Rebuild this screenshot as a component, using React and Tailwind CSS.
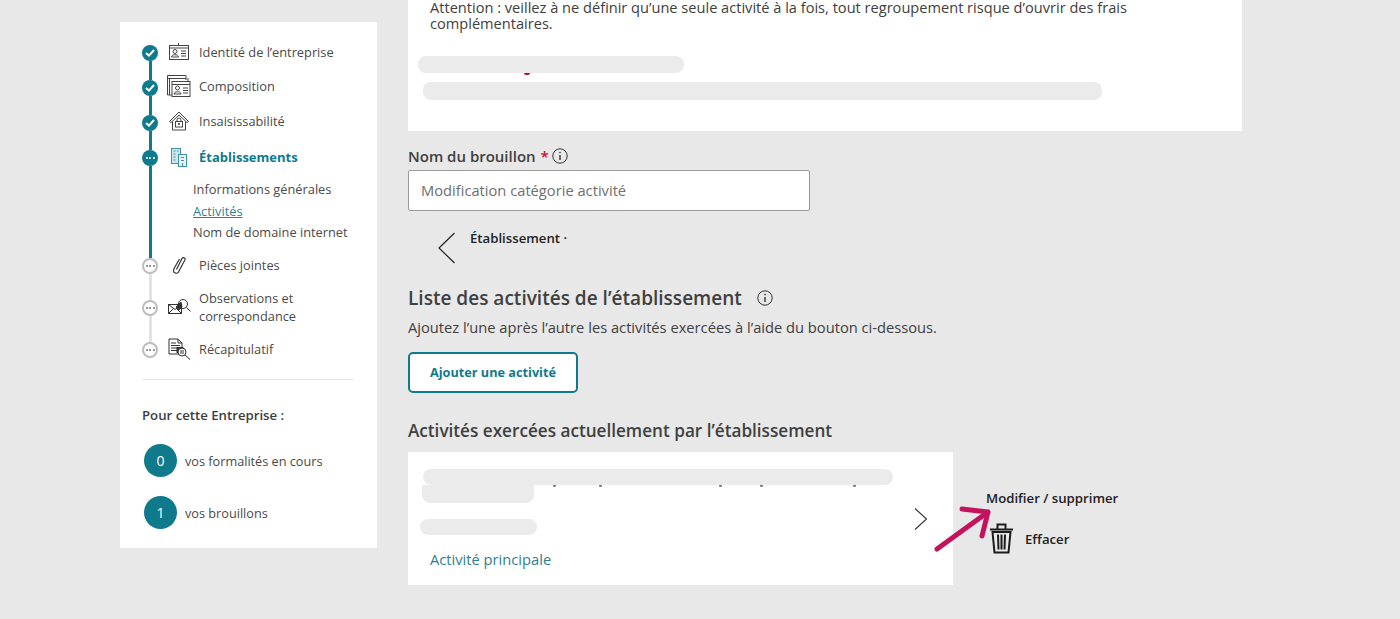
import React from "react";

function IdCard() {
  return (
    <svg width="20" height="18" viewBox="0 0 20 18" fill="none" stroke="#444" strokeWidth="1">
      <rect x="0.500" y="2.500" width="19" height="14" />
      <path d="M0.500 5h19M9.500 0v3" />
      <circle cx="6" cy="8.500" r="2" />
      <path d="M2.500 14c0-3 7-3 7 0M2.500 14h7M12 8h5M12 10.500h5M12 13h5" />
    </svg>
  );
}

function CardStack() {
  return (
    <svg width="24" height="23" viewBox="0 0 24 23" fill="none" stroke="#444" strokeWidth="1">
      <path d="M5 20H0.500V0.500H19V5M0.500 3.500H19" />
      <path d="M2.500 20V3M21 7V3" />
      <rect x="5" y="6.500" width="18" height="15" fill="#fff" />
      <path d="M5 9.500h18" />
      <circle cx="10.500" cy="13" r="2" />
      <path d="M7 19c0-3 7-3 7 0ZM16 13h5M16 15.500h5M16 18h5" />
    </svg>
  );
}

function HouseLock() {
  return (
    <svg width="20" height="20" viewBox="0 0 20 20" fill="none" stroke="#444" strokeWidth="1">
      <path d="M0.500 10.500L10 1l9.500 9.500-1.500 1L10 4 2 11.500Z" />
      <path d="M3.500 10.500v8.500h13v-8.500" />
      <rect x="6.500" y="10.500" width="7" height="5.500" />
      <path d="M8 10.500V9a2 2 0 0 1 4 0v1.500" />
      <circle cx="10" cy="13" r="0.700" fill="#444" />
    </svg>
  );
}

function Building() {
  return (
    <svg width="16" height="19" viewBox="0 0 16 19" fill="none" stroke="#3f93a8" strokeWidth="1">
      <rect x="0.500" y="0.500" width="9" height="15" fill="#cfe6ec" />
      <rect x="7.500" y="6.500" width="8" height="12" fill="#e6f2f5" />
      <path d="M2.500 3h2M6 3h1.500M2.500 6h2M2.500 9h2M2.500 12h2M10 9.500h3M10 12.500h3M11.500 15v3" />
    </svg>
  );
}

function Clip() {
  return (
    <svg width="14" height="19" viewBox="0 0 14 19" fill="none" stroke="#333" strokeWidth="1.200" strokeLinejoin="round">
      <path d="M4.500 13.500L10 2.500c.8-1.500 3.500-.5 3 1.200L6.500 16c-1 2-5 1.500-5-1l.5-2.500L7.500 3" />
    </svg>
  );
}

function MailSearch() {
  return (
    <svg width="23" height="18" viewBox="0 0 23 18" fill="none" stroke="#333" strokeWidth="1">
      <rect x="0.500" y="6.500" width="13" height="9" fill="#fff" />
      <path d="M0.500 6.500l6.500 5 6.500-5M0.500 15.500l5-5M13.500 15.500l-5-5" />
      <path d="M8 9l5-5 1 5-3 3Z" fill="#333" />
      <circle cx="15" cy="6" r="4.500" />
      <path d="M18.500 9.500l4 4" />
    </svg>
  );
}

function DocSearch() {
  return (
    <svg width="23" height="22" viewBox="0 0 23 22" fill="none" stroke="#333" strokeWidth="1">
      <path d="M13 16H1V1h9l4 4v5" />
      <path d="M10 1v4h4M3 5h5M3 7.500h9M3 10h6M3 12.500h6" />
      <rect x="9" y="9.500" width="6" height="5" fill="#333" />
      <circle cx="14" cy="14" r="4" fill="#fff" />
      <path d="M12 13h4M12 15h4M17 17l5 4.500" />
    </svg>
  );
}

function Info({ size = 16 }) {
  return (
    <svg width={size} height={size} viewBox="0 0 16 16" fill="none" stroke="#333" strokeWidth="1">
      <circle cx="8" cy="8" r="7.200" />
      <path d="M8 7v5" strokeWidth="1.400" />
      <circle cx="8" cy="4.600" r="0.800" fill="#333" stroke="none" />
    </svg>
  );
}

function Dot({ done, active }) {
  if (done) {
    return (
      <span className="w-4 h-4 shrink-0 rounded-full bg-[#0f7a8c] flex items-center justify-center">
        <svg width="10" height="8" viewBox="0 0 10 8" fill="none" stroke="#fff" strokeWidth="2">
          <path d="M1 4l3 2.600L9 1" />
        </svg>
      </span>
    );
  }
  return (
    <span
      className={`w-4 h-4 shrink-0 rounded-full flex items-center justify-center gap-[1.500px] ${
        active ? "bg-[#0f7a8c]" : "bg-white border-2 border-[#bdbdbd]"
      }`}
    >
      {[0, 1, 2].map((i) => (
        <span key={i} className={`w-[2px] h-[2px] rounded-full ${active ? "bg-white" : "bg-[#777]"}`} />
      ))}
    </span>
  );
}

function Step({ icon, height, line, done, active, textTop, children, sub }) {
  return (
    <div className={`flex ${height}`}>
      <div className="w-4 flex flex-col items-center shrink-0">
        <Dot done={done} active={active} />
        {line && <div className={`w-[3px] flex-1 ${line}`} />}
      </div>
      <div className="ml-2 min-w-0">
        <div className={`flex items-center ${textTop}`}>
          <div className="w-[26px] flex justify-center shrink-0">{icon}</div>
          <div className={`ml-[7px] ${active ? "font-bold text-[13px] text-[#0f7a8c]" : "text-[#4a4a4a]"}`}>{children}</div>
        </div>
        {sub}
      </div>
    </div>
  );
}

function Sidebar() {
  return (
    <aside className="w-[257px] h-[526px] mt-[22px] bg-white shrink-0 pl-[22px] pr-[23px] pt-[23px] text-[12.800px] leading-[18px]">
      <Step icon={<IdCard />} height="h-[35px]" line="bg-[#0f7a8c]" done textTop="-mt-[3px] h-5">
        Identité de l’entreprise
      </Step>
      <Step icon={<CardStack />} height="h-[35px]" line="bg-[#0f7a8c]" done textTop="-mt-[4px] h-5">
        Composition
      </Step>
      <Step icon={<HouseLock />} height="h-[35px]" line="bg-[#0f7a8c]" done textTop="-mt-[4px] h-5">
        Insaisissabilité
      </Step>
      <Step
        icon={<Building />}
        height="h-[108px]"
        line="bg-[#0f7a8c]"
        active
        textTop="-mt-[3px] h-5"
        sub={
          <div className="ml-[27px] mt-[13px] flex flex-col gap-[3.500px] text-[#4a4a4a] whitespace-nowrap">
            <div>Informations générales</div>
            <div className="text-[#2f7f92] underline">Activités</div>
            <div>Nom de domaine internet</div>
          </div>
        }
      >
        Établissements
      </Step>
      <Step icon={<Clip />} height="h-[42px]" line="bg-[#e3e3e3]" textTop="-mt-[3px] h-5">
        Pièces jointes
      </Step>
      <Step icon={<MailSearch />} height="h-[42px]" line="bg-[#e3e3e3]" textTop="-mt-[11px] h-9">
        Observations et
        <br />
        correspondance
      </Step>
      <Step icon={<DocSearch />} height="h-[37px]" textTop="-mt-[3px] h-5">
        Récapitulatif
      </Step>
      <div className="h-px bg-[#e4e4e4]" />
      <div className="mt-[26px] font-semibold text-[13.200px] text-[#3d3d3d]">Pour cette Entreprise :</div>
      <div className="mt-[20px] ml-[2px] flex flex-col gap-[19px] text-[#4a4a4a] text-[12.700px]">
        <div className="flex items-center gap-2">
          <span className="w-[33px] h-[33px] rounded-full bg-[#0f7a8c] text-white text-[14px] flex items-center justify-center">0</span>
          vos formalités en cours
        </div>
        <div className="flex items-center gap-2">
          <span className="w-[33px] h-[33px] rounded-full bg-[#0f7a8c] text-white text-[14px] flex items-center justify-center">1</span>
          vos brouillons
        </div>
      </div>
    </aside>
  );
}

function Main() {
  return (
    <main className="w-[834px] shrink-0 text-[#404040]">
      {/* top notice */}
      <section className="h-[131px] bg-white pl-[22px] pr-[100px] text-[14.600px] leading-[16px]">
        <p className="-translate-y-px">
          Attention : veillez à ne définir qu’une seule activité à la fois, tout regroupement risque d’ouvrir des frais
          complémentaires.
        </p>
        <div className="relative h-[17px] w-[266px] -ml-[12px] mt-[24px] rounded-lg bg-[#ebebeb]">
          <span className="absolute left-[106px] -bottom-[2px] w-[6px] h-[2px] rounded-b-full bg-[#b0103f]" />
        </div>
        <div className="h-[18px] w-[679px] -ml-[7px] mt-[9px] rounded-lg bg-[#ebebeb]" />
      </section>

      {/* draft name */}
      <div className="mt-[15px] flex items-center h-5 text-[15px] font-semibold">
        Nom du brouillon
        <span className="text-[#c8102e] ml-[5px]">*</span>
        <span className="ml-[3px]">
          <Info />
        </span>
      </div>
      <div className="mt-[4px] w-[402px] h-[41px] bg-white border border-[#9a9a9a] rounded-[2px] flex items-center pl-[12px] text-[14.700px] text-[#6f6f6f]">
        Modification catégorie activité
      </div>

      <div className="mt-[21px] ml-[30px] flex items-start h-[32px]">
        <svg width="18" height="32" viewBox="0 0 18 32" fill="none" stroke="#222" strokeWidth="1.200">
          <path d="M16.500 1L1 16l15.500 15" />
        </svg>
        <span className="ml-[14px] -mt-[4px] text-[13.200px] leading-5 font-semibold text-[#222]">Établissement ·</span>
      </div>

      <div className="mt-[22px] flex items-center h-6">
        <h2 className="text-[19.050px] font-semibold">Liste des activités de l’établissement</h2>
        <span className="ml-[15px]">
          <Info />
        </span>
      </div>
      <p className="mt-[7px] text-[14.700px] leading-5">
        Ajoutez l’une après l’autre les activités exercées à l’aide du bouton ci-dessous.
      </p>
      <button className="mt-[15px] w-[170px] h-[41px] bg-white border-2 border-[#0f7a8c] rounded-[5px] text-[12.700px] font-bold text-[#0f7a8c]">
        Ajouter une activité
      </button>
      <h3 className="mt-[27px] text-[17.150px] leading-[22px] font-semibold">
        Activités exercées actuellement par l’établissement
      </h3>

      {/* activity row */}
      <div className="mt-[10px] flex items-start">
        <section className="w-[545px] h-[133px] bg-white flex shrink-0">
          <div className="flex-1 pl-[22px] pt-[17px]">
            <div className="relative h-[16px] w-[470px] -ml-[7px] rounded-lg bg-[#ebebeb]">
              {["left-[130px]", "left-[176px]", "left-[296px]", "left-[337px]", "left-[430px]"].map((pos) => (
                <span key={pos} className={`absolute ${pos} -bottom-[2px] w-[3px] h-[2px] rounded-b-full bg-[#777]`} />
              ))}
            </div>
            <div className="h-[18px] w-[112px] -ml-[8px] rounded-b-lg bg-[#ebebeb]" />
            <div className="h-[16px] w-[117px] -ml-[10px] mt-[16px] rounded-lg bg-[#ebebeb]" />
            <div className="mt-[14px] text-[14.700px] leading-5 text-[#2f7f92]">Activité principale</div>
          </div>
          <div className="w-[40px] flex items-start justify-start pt-[56px] pl-[1px]">
            <svg width="14" height="22" viewBox="0 0 14 22" fill="none" stroke="#333" strokeWidth="1.100">
              <path d="M1 0.500L12.500 11 1 21.500" />
            </svg>
          </div>
        </section>
        <div className="relative ml-[33px] mt-[36px] text-[13.200px] font-semibold text-[#222]">
          <div className="leading-5 whitespace-nowrap">Modifier / supprimer</div>
          <div className="flex items-center mt-[15px]">
            <svg className="ml-[3px]" width="25" height="31" viewBox="0 0 25 31" fill="none" stroke="#1c1c1c" strokeWidth="2">
              <path d="M1 6.500h23M8.500 6V1.500h8V6" />
              <path d="M3.500 9l2 20.500h14L21.500 9ZM9 11.500l.5 15M12.500 11.500v15M16 11.500l-.5 15" />
            </svg>
            <span className="ml-[11px] mt-[2px]">Effacer</span>
          </div>
          <svg className="absolute -left-[52px] top-[17px]" width="60" height="48" viewBox="0 0 60 48" fill="none" stroke="#c4125c" strokeWidth="5" strokeLinecap="round" strokeLinejoin="round">
            <path d="M3 44L54 7M28 4L54 7 48 31" />
          </svg>
        </div>
      </div>
    </main>
  );
}

export default function App() {
  return (
    <div className="h-[619px] overflow-hidden bg-[#e8e8e8] flex pl-[120px] gap-[31px] font-['Open_Sans',sans-serif]">
      <Sidebar />
      <Main />
    </div>
  );
}
